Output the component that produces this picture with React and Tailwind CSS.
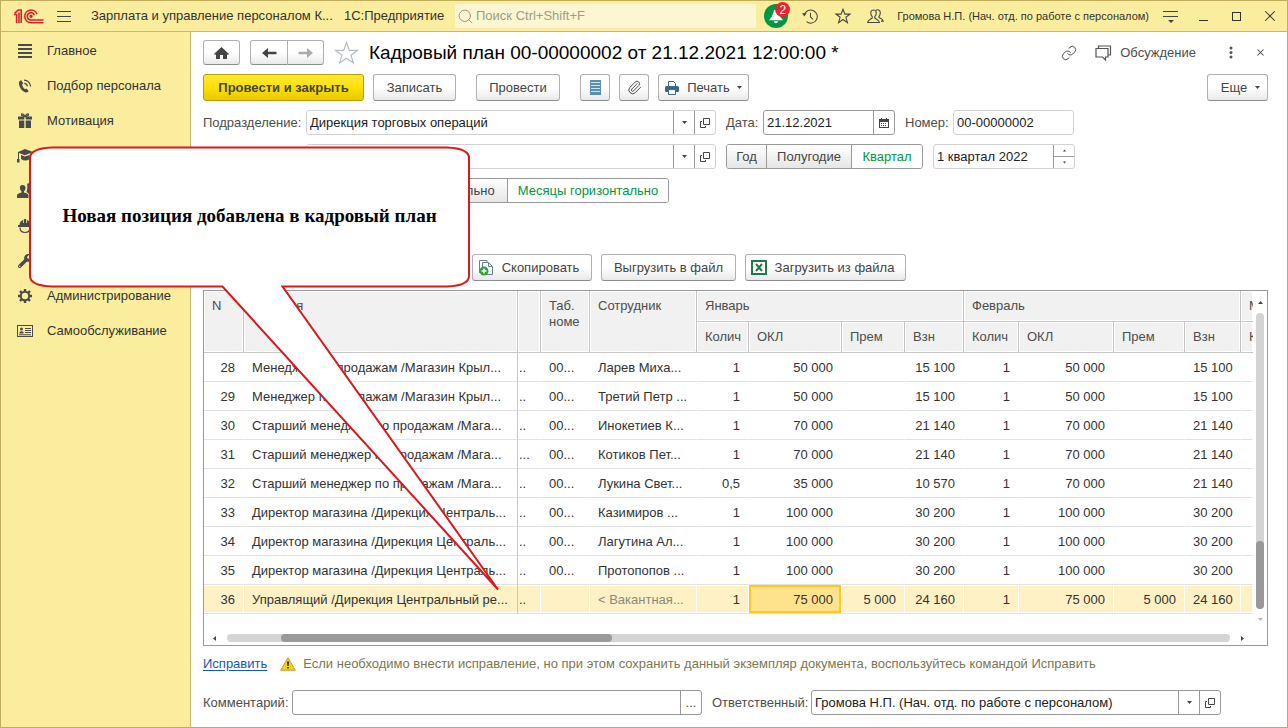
import { Fragment } from 'react';
import { FaWrench } from 'react-icons/fa';
import { Paperclip, Link, Search, X } from 'lucide-react';

const rows = [
  { n: 28, name: 'Менеджер по продажам /Магазин Крыл...', dots: '..', tab: '00...', person: 'Ларев Миха...', jan: ['1', '50 000', '', '15 100'], feb: ['1', '50 000', '', '15 100'] },
  { n: 29, name: 'Менеджер по продажам /Магазин Крыл...', dots: '..', tab: '00...', person: 'Третий Петр ...', jan: ['1', '50 000', '', '15 100'], feb: ['1', '50 000', '', '15 100'] },
  { n: 30, name: 'Старший менеджер по продажам /Мага...', dots: '..', tab: '00...', person: 'Инокетиев К...', jan: ['1', '70 000', '', '21 140'], feb: ['1', '70 000', '', '21 140'] },
  { n: 31, name: 'Старший менеджер по продажам /Мага...', dots: '...', tab: '00...', person: 'Котиков Пет...', jan: ['1', '70 000', '', '21 140'], feb: ['1', '70 000', '', '21 140'] },
  { n: 32, name: 'Старший менеджер по продажам /Мага...', dots: '..', tab: '00...', person: 'Лукина Свет...', jan: ['0,5', '35 000', '', '10 570'], feb: ['1', '70 000', '', '21 140'] },
  { n: 33, name: 'Директор магазина /Дирекция Централь...', dots: '..', tab: '00...', person: 'Казимиров ...', jan: ['1', '100 000', '', '30 200'], feb: ['1', '100 000', '', '30 200'] },
  { n: 34, name: 'Директор магазина /Дирекция Централь...', dots: '..', tab: '00...', person: 'Лагутина Ал...', jan: ['1', '100 000', '', '30 200'], feb: ['1', '100 000', '', '30 200'] },
  { n: 35, name: 'Директор магазина /Дирекция Централь...', dots: '..', tab: '00...', person: 'Протопопов ...', jan: ['1', '100 000', '', '30 200'], feb: ['1', '100 000', '', '30 200'] },
  { n: 36, name: 'Управлящий /Дирекция Центральный ре...', dots: '..', tab: '', person: '< Вакантная...', jan: ['1', '75 000', '5 000', '24 160'], feb: ['1', '75 000', '5 000', '24 160'], active: true },
];

const Logo = () => (
  <svg width="30" height="15" viewBox="0 0 30 15" fill="none" stroke="#d8232a" strokeWidth="1.6">
    <path d="M0 5.5h2.6V14M0.6 4.4L4.2 1h3V14M5 3.5V14" />
    <path d="M23 5.2A6.3 6.3 0 1 0 17 13.7H29.5" />
    <path d="M20.3 6.2A3.6 3.6 0 1 0 17 11H29.5" />
    <circle cx="17" cy="7.3" r="0.9" fill="#d8232a" />
  </svg>
);

const LinesIcon = () => (
  <svg width="16" height="16" fill="#4a4a4a">
    <path d="M1 1h14v2H1zM1 5h14v2H1zM1 9h14v2H1zM1 13h14v2H1z" />
  </svg>
);

const PhoneIcon = () => (
  <svg width="14" height="14" viewBox="0 0 14 14" fill="#4a4a4a">
    <path d="M3.300 1.200L5.300 4.500 4.100 5.500c.3 1.800 1.400 3.700 2.900 4.700l1.500-.6 2.200 2.700c-.8 1.100-2.300 1.500-3.700.9C3.500 11.700 1 7.800.900 4 .900 2.600 1.900 1.400 3.300 1.200z" />
    <path d="M6.300 4.300q2.700.2 3 3M6 1.200q5.800.3 6.600 6.300" fill="none" stroke="#4a4a4a" strokeWidth="1.300" />
  </svg>
);

const GiftIcon = () => (
  <svg width="14" height="15" viewBox="0 0 14 15" fill="#4a4a4a">
    <path d="M0 3.500h6.300v3H0zM7.700 3.500H14v3H7.700zM1 7.500h5.300V15H1zM7.700 7.500H13V15H7.700z" />
    <path d="M6.700 3.500C5 3.300 3.500 2.500 3.500 1.500S6 .500 6.700 3.500zM7.300 3.500C9 3.300 10.500 2.500 10.500 1.500S8 .500 7.300 3.500z" fill="none" stroke="#4a4a4a" strokeWidth="1.300" />
  </svg>
);

const CapIcon = () => (
  <svg width="16" height="14" viewBox="0 0 16 14" fill="#4a4a4a">
    <path d="M8 0l8 3-8 3.200L2 4v6h.5v3.500H0V10h1V3zM4 6l4 1.600L12.500 6v4q-4 3-8.500 0z" />
  </svg>
);

const PeopleIcon = () => (
  <svg width="16" height="15" viewBox="0 0 16 15" fill="#4a4a4a">
    <path d="M5.500 2C3.500 2 2.600 3.500 3 5.500c.2 1.400.8 2.300 1.500 2.700v1.300C2.500 10.200 0 10.700 0 12.500V15h11.500v-2.500c0-1.800-2.500-2.300-4.500-3V8.200C7.700 7.800 8.300 7 8.500 5.500 8.900 3.500 7.600 2 5.500 2z" />
    <path d="M10 1c2-2 4.500 0 4 3-.2 1.500-.8 2.500-1.500 3v1c2 .700 3.500 1.500 3.500 3V12h-3.500c-.5-1.500-2-2.500-3-3C10.300 7.500 10.700 3 10 1z" />
  </svg>
);

const HelmetIcon = () => (
  <svg width="14" height="16" viewBox="0 0 14 16" fill="#4a4a4a">
    <path d="M1.500 7C1.500 4.500 3 2.500 5 2v3h.8V1h2.400v4H9V2c2 .5 3.500 2.500 3.500 5H14v2H0V7z" />
    <path d="M2 9.500q0 5 5 5t5-5" fill="none" stroke="#4a4a4a" strokeWidth="1.200" />
  </svg>
);

const GearIcon = () => (
  <svg width="16" height="16" viewBox="0 0 16 16" fill="none" stroke="#4a4a4a" strokeWidth="2">
    <circle cx="8" cy="8" r="4.2" />
    <path strokeWidth="2.4" d="M8 1V3.500M8 12.500V15M1 8h2.500M12.500 8H15M3 3l1.800 1.800M11.200 11.200L13 13M13 3l-1.800 1.800M4.800 11.200L3 13" />
  </svg>
);

const CardIcon = () => (
  <svg width="16" height="12" viewBox="0 0 16 12" fill="#4a4a4a">
    <path d="M0 0h16v12H0zM1 1v10h14V1z" fillRule="evenodd" />
    <circle cx="4.5" cy="4" r="1.5" />
    <path d="M2.5 8.5V7q2-1.5 4 0v1.5zM8 3h6v1H8zM8 5h6v1H8zM8 7h6v1H8zM2 9.3h12v1H2z" />
  </svg>
);

const Caret = ({ className = '' }) => (
  <svg width="5" height="3" viewBox="0 0 5 3" className={className} fill="#444">
    <path d="M0 0h5L2.5 3z" />
  </svg>
);

const OpenIcon = () => (
  <svg width="10" height="10" viewBox="0 0 10 10" fill="none" stroke="#444">
    <path d="M3.5 0.5h6v6h-6zM2 3.5H0.5v6h5V8" />
  </svg>
);

const Arrow = ({ color, flip }) => (
  <svg width="15" height="10" viewBox="0 0 15 10" className={flip ? 'rotate-180' : ''}>
    <path d="M0 5l6-5v3.8h8.5v2.4H6V10z" fill={color} />
  </svg>
);

const menu = [
  { title: 'Главное', icon: <LinesIcon /> },
  { title: 'Подбор персонала', icon: <PhoneIcon /> },
  { title: 'Мотивация', icon: <GiftIcon /> },
  { label: 'Обучение', icon: <CapIcon /> },
  { label: 'Кадры', icon: <PeopleIcon /> },
  { label: 'Охрана труда', icon: <HelmetIcon /> },
  { label: 'Настройка', icon: <FaWrench size={14} /> },
  { title: 'Администрирование', icon: <GearIcon /> },
  { title: 'Самообслуживание', icon: <CardIcon /> },
];

const Button = ({ className = '', primary, children, ...rest }) => (
  <button
    className={`flex h-[27px] shrink-0 items-center justify-center rounded-[3px] border bg-linear-to-b whitespace-nowrap text-[#444] ${
      primary
        ? 'border-[#b5a000] from-[#ffe92e] via-[#ffe000] to-[#e6c900] font-bold'
        : 'border-[#b0b0b0] border-b-[#8c8c8c] from-white from-50% to-[#e9e9e9]'
    } ${className}`}
    {...rest}
  >
    {children}
  </button>
);

const Field = ({ id, value, className = '', dark, children, ...rest }) => (
  <div className={`flex h-[25px] min-w-0 rounded-[3px] border bg-white ${dark ? 'border-[#999]' : 'border-[#d2d2d2]'} ${className}`}>
    <input id={id} defaultValue={value} className="w-full min-w-0 flex-1 bg-transparent px-[3px] text-[#222] outline-none" {...rest} />
    {children}
  </div>
);

const FieldButton = ({ label, children }) => (
  <button aria-label={label} className="flex w-[21px] shrink-0 items-center justify-center border-l border-[#999]">
    {children}
  </button>
);

const Toggle = ({ name, options, active }) => (
  <div role="radiogroup" className="flex h-[25px] shrink-0 overflow-hidden rounded-[3px] border border-[#999]">
    {options.map(([text, width]) => (
      <label
        key={text}
        className={`relative flex items-center justify-center border-l border-[#999] whitespace-nowrap first:border-l-0 ${width} ${
          text === active ? 'bg-white text-[#009646]' : 'bg-linear-to-b from-white to-[#e6e6e6] text-[#444]'
        }`}
      >
        <input type="radio" name={name} defaultChecked={text === active} className="sr-only" />
        {text}
      </label>
    ))}
  </div>
);

const TitleBar = () => (
  <header className="flex h-[31px] items-center border-b border-[#c9b866] bg-[#fbed9e] text-[#333]">
    <div className="ml-[13px] shrink-0"><Logo /></div>
    <button aria-label="Меню" className="ml-[13px] shrink-0">
      <svg width="14" height="11" fill="#444"><path d="M0 0h14v1H0zM0 5h14v1H0zM0 10h14v1H0z" /></svg>
    </button>
    <span className="ml-5 w-[253px] shrink-0 whitespace-nowrap">Зарплата и управление персоналом К...</span>
    <span className="w-[111px] shrink-0 whitespace-nowrap">1С:Предприятие</span>
    <label className="flex h-6 flex-1 items-center rounded-[2px] bg-[#fdf6d2] pl-[2px]">
      <Search size={17} strokeWidth={1.4} className="shrink-0 text-[#9b9678]" />
      <input type="search" placeholder="Поиск Ctrl+Shift+F" aria-label="Поиск" className="ml-[2px] w-full min-w-0 flex-1 bg-transparent outline-none placeholder:text-[#a09c86]" />
    </label>
    <button aria-label="Уведомления" className="relative ml-2 flex size-6 shrink-0 items-center justify-center rounded-full bg-[#009646]">
      <svg width="16" height="16" viewBox="0 0 16 16" fill="#fff">
        <path d="M8 1q2 .5 2.800 4T15 12.200H1Q4.500 8.500 5.200 5T8 1zM5.800 13.300h4.400Q9.600 15.300 8 15.300t-2.200-2z" />
      </svg>
      <span className="absolute -top-[2px] left-[11px] flex size-[15px] items-center justify-center rounded-full bg-[#e8242c] text-xs text-white">2</span>
    </button>
    <button aria-label="История" className="ml-[5px] flex w-[33px] shrink-0 justify-center">
      <svg width="16" height="15" viewBox="0 0 17 16" fill="none" stroke="#444" strokeWidth="1.100">
        <path d="M2.400 6.500A7 7 0 1 1 4.800 13.500M9 4v4.500l2.800 2.500" />
        <path d="M0 4.500h4.800L2.400 8z" fill="#444" stroke="none" />
      </svg>
    </button>
    <button aria-label="Избранное" className="flex w-[33px] shrink-0 justify-center">
      <svg width="16" height="16" viewBox="0 0 16 16" fill="none" stroke="#444" strokeWidth="1.100">
        <path d="M8 1.200l1.900 4.900h5l-4 3.200 1.500 5.300L8 11.500l-4.400 3.100 1.500-5.300-4-3.200h5z" />
      </svg>
    </button>
    <button aria-label="Пользователи" className="flex w-[33px] shrink-0 justify-center">
      <svg width="17" height="15" viewBox="0 0 17 15" fill="none" stroke="#444" strokeWidth="1.100">
        <path d="M6.500 1C4 1 3.500 3 4 5.300c.2 1.200.8 1.800 1.200 2.300v1.500C3 10.500.800 11 .600 13.500h11.800C12.200 11 10 10.500 7.800 9.100V7.600C8.200 7 9 6.500 9.100 5.300 9.500 3 9 1 6.500 1zM9 1.200c1.500-1 4.300-.4 4.300 2.300 0 2-.5 3.200-1.300 4v1c2 1 4 1.500 4.200 3.600H14" />
      </svg>
    </button>
    <span className="ml-[5px] shrink-0 text-[11px] whitespace-nowrap">Громова Н.П. (Нач. отд. по работе с персоналом)</span>
    <button aria-label="Настройки" className="ml-[5px] flex w-[33px] shrink-0 justify-center pt-[2px]">
      <svg width="15" height="13" fill="#444"><path d="M0 0h15v1H0zM0 5h15v1H0zM5 9h6l-3 3z" /></svg>
    </button>
    <button aria-label="Свернуть" className="flex w-[33px] shrink-0 justify-center pt-2"><span className="h-px w-[9px] bg-[#333]" /></button>
    <button aria-label="Развернуть" className="flex w-[33px] shrink-0 justify-center"><span className="size-[9px] border border-[#333]" /></button>
    <button aria-label="Закрыть" className="flex w-[34px] shrink-0 justify-center"><X size={18} strokeWidth={1.4} /></button>
  </header>
);

const Sidebar = () => (
  <nav className="w-[190px] shrink-0 border-r border-[#c9b866] bg-[#fbed9e] pt-px text-[#333]">
    {menu.map((item) => (
      <a key={item.title || item.label} href="#" aria-label={item.label} className="flex h-[35px] items-center pl-4">
        <span className="flex w-4 justify-center text-[#4a4a4a]">{item.icon}</span>
        <span className="ml-[14px]">{item.title}</span>
      </a>
    ))}
  </nav>
);

const th = 'overflow-hidden border-r border-b border-[#c6c6c6] bg-[#f1f1f1] px-2 text-left align-top font-normal whitespace-nowrap shadow-[inset_0_0_0_1px_#fff]';

const PlanTable = () => (
  <table className="w-full table-fixed border-separate border-spacing-0 text-[#333]">
    <colgroup>
      <col className="w-[40px]" />
      <col className="w-[274px]" />
      <col className="w-[23px]" />
      <col className="w-[49px]" />
      <col className="w-[107px]" />
      <col className="w-[52px]" />
      <col className="w-[93px]" />
      <col className="w-[63px]" />
      <col className="w-[59px]" />
      <col className="w-[55px]" />
      <col className="w-[95px]" />
      <col className="w-[71px]" />
      <col className="w-[56px]" />
      <col />
    </colgroup>
    <thead className="text-[#4d4d4d]">
      <tr className="h-[31px]">
        <th rowSpan={2} className={`${th} pt-[7px]`}>N</th>
        <th rowSpan={2} className={`${th} pt-[7px]`}>Позиция</th>
        <th rowSpan={2} className={th} />
        <th rowSpan={2} className={`${th} pt-[7px]`}>Таб.<br />номе</th>
        <th rowSpan={2} className={`${th} pt-[7px]`}>Сотрудник</th>
        <th colSpan={4} className={`${th} pt-[7px]`}>Январь</th>
        <th colSpan={4} className={`${th} pt-[7px]`}>Февраль</th>
        <th className={`${th} border-r-0 pt-[7px]`}>М</th>
      </tr>
      <tr className="h-[31px]">
        {['Колич', 'ОКЛ', 'Прем', 'Взн', 'Колич', 'ОКЛ', 'Прем', 'Взн'].map((t, i) => (
          <th key={i} className={`${th} pt-[7px]`}>{t}</th>
        ))}
        <th className={`${th} border-r-0 pt-[7px]`}>К</th>
      </tr>
    </thead>
    <tbody>
      {rows.map((row) => {
        const td = `h-[29px] overflow-hidden border-r border-b border-r-white border-b-[#e2e2e2] px-2 pt-[2px] whitespace-nowrap ${
          row.active ? 'bg-[#fef1c6] shadow-[inset_0_1px_0_#fff,inset_0_-1px_0_#fff]' : ''
        }`;
        return (
          <tr key={row.n}>
            <td className={`${td} text-right`}>{row.n}</td>
            <td className={`${td} !border-r-[#c6c6c6]`}>{row.name}</td>
            <td className={`${td} !px-px`}>{row.dots}</td>
            <td className={`${td} !pr-0`}>{row.tab}</td>
            <td className={`${td} ${row.active ? 'text-[#8a8a7c]' : ''}`}>{row.person}</td>
            {[row.jan, row.feb].map((month, m) => (
              <Fragment key={m}>
                {month.map((value, i) => (
                  <td
                    key={i}
                    className={`${td} text-right ${
                      row.active && m === 0 && i === 1 ? '!bg-[#ffe38c] !shadow-[inset_0_0_0_2px_#fbc91f]' : ''
                    }`}
                  >
                    {value}
                  </td>
                ))}
              </Fragment>
            ))}
            <td className={td} />
          </tr>
        );
      })}
    </tbody>
  </table>
);

const Callout = () => (
  <div className="pointer-events-none absolute top-[145px] left-[28px] h-[446px] w-[472px]">
    <svg width="472" height="446" viewBox="0 0 472 446" className="absolute inset-0">
      <path
        d="M23 1.500H418Q440 2.500 440 12V130Q440 139.500 418 140.500H253.500L469 443.500L193.500 140.500H23Q1 139.500 1 130V12Q1 2.500 23 1.500Z"
        fill="#fff"
        stroke="#d9181f"
        strokeWidth="2"
      />
    </svg>
    <p className="relative flex h-[139px] w-[441px] items-center justify-center font-['Liberation_Serif',serif] text-[19px] font-bold whitespace-nowrap text-black">
      Новая позиция добавлена в кадровый план
    </p>
  </div>
);

export default function App() {
  return (
    <div className="relative flex min-h-screen flex-col border border-[#c0ae5c] bg-white font-['Liberation_Sans',Arial,sans-serif] text-[13px] leading-4">
      <TitleBar />
      <div className="flex flex-1">
        <Sidebar />
        <main className="flex min-w-0 flex-1 flex-col px-3 pt-2 pb-3 pr-[19px] text-[#4d4d4d]">
          <div className="flex h-[25px] items-center">
            <Button aria-label="Домой" className="!h-[25px] w-[37px]">
              <svg width="15" height="12" viewBox="0 0 15 12" fill="#444">
                <path d="M7.500 0L15 7l-1 1-1-.8V12H9V8H6v4H2V7.200L1 8 0 7z" />
              </svg>
            </Button>
            <Button aria-label="Назад" className="ml-[10px] !h-[25px] w-[38px] rounded-r-none"><Arrow color="#444" /></Button>
            <Button aria-label="Вперед" className="!h-[25px] w-9 rounded-l-none border-l-0"><Arrow color="#aaa" flip /></Button>
            <button aria-label="В избранное" className="ml-[10px] shrink-0">
              <svg width="25" height="24" viewBox="0 0 25 24" fill="#fff" stroke="#b4bcc6" strokeWidth="1.200">
                <path d="M12.500 1.500l2.800 7.800h8.200l-6.600 4.900 2.500 7.900-6.900-4.800-6.900 4.800 2.500-7.900L1.500 9.300h8.200z" />
              </svg>
            </button>
            <h1 className="ml-[10px] text-[19px] whitespace-nowrap text-black">Кадровый план 00-00000002 от 21.12.2021 12:00:00 *</h1>
            <button aria-label="Ссылка" className="mr-[18px] ml-auto"><Link size={16} strokeWidth={1.500} /></button>
            <button className="flex items-center">
              <svg width="17" height="16" viewBox="0 0 17 16" fill="none" stroke="#555" strokeWidth="1.200">
                <path d="M3.500 3V1h12v9H13M1 3.500h12v8.500H10.500V15L7.500 12H1z" />
              </svg>
              <span className="ml-2">Обсуждение</span>
            </button>
            <button aria-label="Еще действия" className="ml-[33px]">
              <svg width="4" height="13" fill="#555"><circle cx="2" cy="2" r="1.500" /><circle cx="2" cy="6.500" r="1.500" /><circle cx="2" cy="11" r="1.500" /></svg>
            </button>
            <button aria-label="Закрыть форму" className="mr-[2px] ml-[22px]"><X size={11} strokeWidth={2.200} /></button>
          </div>

          <div className="mt-[9px] flex h-[27px] items-center">
            <Button primary className="w-[161px]">Провести и закрыть</Button>
            <Button className="ml-[9px] w-[83px]">Записать</Button>
            <Button className="ml-5 w-[84px]">Провести</Button>
            <Button aria-label="Движения документа" className="ml-5 w-[30px]">
              <svg width="11" height="15"><path d="M0 0h11v15H0z" fill="#5c8db3" /><path d="M1 2h9v1H1zM1 5h9v1H1zM1 8h9v1H1zM1 11h9v1H1z" fill="#cfe3f1" /></svg>
            </Button>
            <Button aria-label="Файлы" className="ml-[9px] w-[30px]"><Paperclip size={15} strokeWidth={1.500} /></Button>
            <Button aria-haspopup="menu" className="ml-[9px] w-[91px]">
              <svg width="14" height="14" viewBox="0 0 14 14">
                <path d="M3.500 5V.500h5l2 2V5" fill="#fff" stroke="#3a668c" />
                <rect y="5" width="14" height="6" rx="1.500" fill="#3a668c" />
                <path d="M3.500 8.500h7v5h-7z" fill="#fff" stroke="#3a668c" />
              </svg>
              <span className="ml-2">Печать</span>
              <Caret className="ml-[7px]" />
            </Button>
            <Button aria-haspopup="menu" className="ml-auto w-[61px] pl-[6px]">
              Еще
              <Caret className="ml-2" />
            </Button>
          </div>

          <div className="mt-[9px] flex items-center">
            <label htmlFor="dept" className="w-[103px] shrink-0">Подразделение:</label>
            <Field id="dept" value="Дирекция торговых операций" className="max-w-[410px] flex-1">
              <FieldButton label="Выбрать"><Caret /></FieldButton>
              <FieldButton label="Открыть"><OpenIcon /></FieldButton>
            </Field>
            <label htmlFor="date" className="ml-[10px] w-[37px] shrink-0">Дата:</label>
            <Field id="date" value="21.12.2021" dark className="w-[132px]">
              <FieldButton label="Календарь">
                <svg width="10" height="10" viewBox="0 0 10 10"><path d="M0 1h2V0h1v1h4V0h1v1h2v9H0zM1 4v5h8V4z" fill="#444" fillRule="evenodd" /><path d="M2 5h1v1H2zM4 5h1v1H4zM6 5h1v1H6zM2 7h1v1H2zM4 7h1v1H4zM6 7h1v1H6z" fill="#444" /></svg>
              </FieldButton>
            </Field>
            <label htmlFor="number" className="ml-[10px] w-12 shrink-0">Номер:</label>
            <Field id="number" value="00-00000002" className="w-[121px]" />
          </div>

          <div className="mt-[9px] flex items-center">
            <Field aria-label="Сценарий" className="ml-[103px] max-w-[410px] flex-1">
              <FieldButton label="Выбрать сценарий"><Caret /></FieldButton>
              <FieldButton label="Открыть сценарий"><OpenIcon /></FieldButton>
            </Field>
            <div className="ml-[10px]">
              <Toggle name="period" active="Квартал" options={[['Год', 'w-[39px]'], ['Полугодие', 'w-[85px]'], ['Квартал', 'w-[71px]']]} />
            </div>
            <Field aria-label="Период" value="1 квартал 2022" className="ml-[10px] w-[142px]">
              <div className="flex w-[21px] flex-col border-l border-[#999]">
                <button aria-label="Следующий" className="flex flex-1 items-center justify-center border-b border-[#999]"><Caret className="w-[3px] rotate-180" /></button>
                <button aria-label="Предыдущий" className="flex flex-1 items-center justify-center"><Caret className="w-[3px]" /></button>
              </div>
            </Field>
          </div>

          <div className="mt-[9px] flex pl-[150px]">
            <Toggle name="layout" active="Месяцы горизонтально" options={[['Месяцы вертикально', 'w-[153px]'], ['Месяцы горизонтально', 'w-[161px]']]} />
          </div>

          <div className="mt-[51px] flex gap-[9px] pl-[269px]">
            <Button className="w-[120px] pr-[6px]">
              <svg width="15" height="16" viewBox="0 0 15 16" className="mr-2">
                <path d="M.5.500H8V3M.5.500V13M3.500 2.500h6l4 4v8h-10z" fill="#fff" stroke="#6b7f93" />
                <path d="M9.500 2.500v4h4" fill="none" stroke="#6b7f93" />
                <circle cx="5" cy="11" r="4.500" fill="#2f9e3f" />
                <path d="M2.500 11h5M5 8.500v5" stroke="#fff" strokeWidth="1.400" />
              </svg>
              Скопировать
            </Button>
            <Button className="w-[135px]">Выгрузить в файл</Button>
            <Button className="w-[161px] pr-[6px]">
              <svg width="16" height="15" viewBox="0 0 16 15" className="mr-2">
                <path d="M1 1h14v13H1z" fill="#fff" stroke="#1f7a4a" strokeWidth="2" />
                <path d="M5 4l6 7M11 4l-6 7" stroke="#1f7a4a" strokeWidth="2" />
              </svg>
              Загрузить из файла
            </Button>
          </div>

          <section className="mt-[9px] flex flex-1 flex-col border border-[#999]">
            <div className="flex">
              <div className="min-w-0 flex-1 overflow-hidden">
                <PlanTable />
              </div>
              <div className="-mb-[7px] flex w-[14px] flex-col items-center pt-[10px]">
                <Caret className="rotate-180" />
                <div className="mt-[9px] flex w-2 flex-1 flex-col justify-end rounded-full bg-[#d4d4d4]">
                  <div className="h-[68px] rounded-full bg-[#999]" />
                </div>
                <Caret className="mt-[9px] opacity-40" />
              </div>
            </div>
            <div className="flex flex-1 items-center px-2 pt-[19px] pb-[2px]">
              <Caret className="rotate-90" />
              <div className="ml-[10px] h-2 flex-1 rounded-full bg-[#d4d4d4]">
                <div className="ml-[54px] h-2 w-[33%] rounded-full bg-[#999]" />
              </div>
              <Caret className="mr-[14px] ml-[10px] -rotate-90" />
            </div>
          </section>

          <div className="mt-[9px] flex h-[18px] items-center">
            <a href="#" className="text-[#1a55b5] underline underline-offset-2">Исправить</a>
            <svg width="16" height="14" viewBox="0 0 16 14" className="ml-[13px] shrink-0">
              <path d="M8 .800L15.300 13.300H.700z" fill="#f7d117" stroke="#b89f3c" strokeLinejoin="round" />
              <path d="M7 4.500h2L8.600 9H7.400zM7.200 10h1.600v1.600H7.200z" fill="#222" />
            </svg>
            <span className="ml-[7px] whitespace-nowrap text-[#7d7650]">
              Если необходимо внести исправление, но при этом сохранить данный экземпляр документа, воспользуйтесь командой Исправить
            </span>
          </div>

          <div className="mt-[17px] flex items-center pr-[47px]">
            <label htmlFor="comment" className="w-[89px] shrink-0">Комментарий:</label>
            <Field id="comment" dark className="max-w-[410px] flex-1">
              <FieldButton label="Редактировать">...</FieldButton>
            </Field>
            <label htmlFor="owner" className="ml-[10px] w-[99px] shrink-0">Ответственный:</label>
            <Field id="owner" dark value="Громова Н.П. (Нач. отд. по работе с персоналом)" className="max-w-[410px] flex-1">
              <FieldButton label="Выбрать ответственного"><Caret /></FieldButton>
              <FieldButton label="Открыть ответственного"><OpenIcon /></FieldButton>
            </Field>
          </div>
        </main>
      </div>
      <Callout />
    </div>
  );
}
